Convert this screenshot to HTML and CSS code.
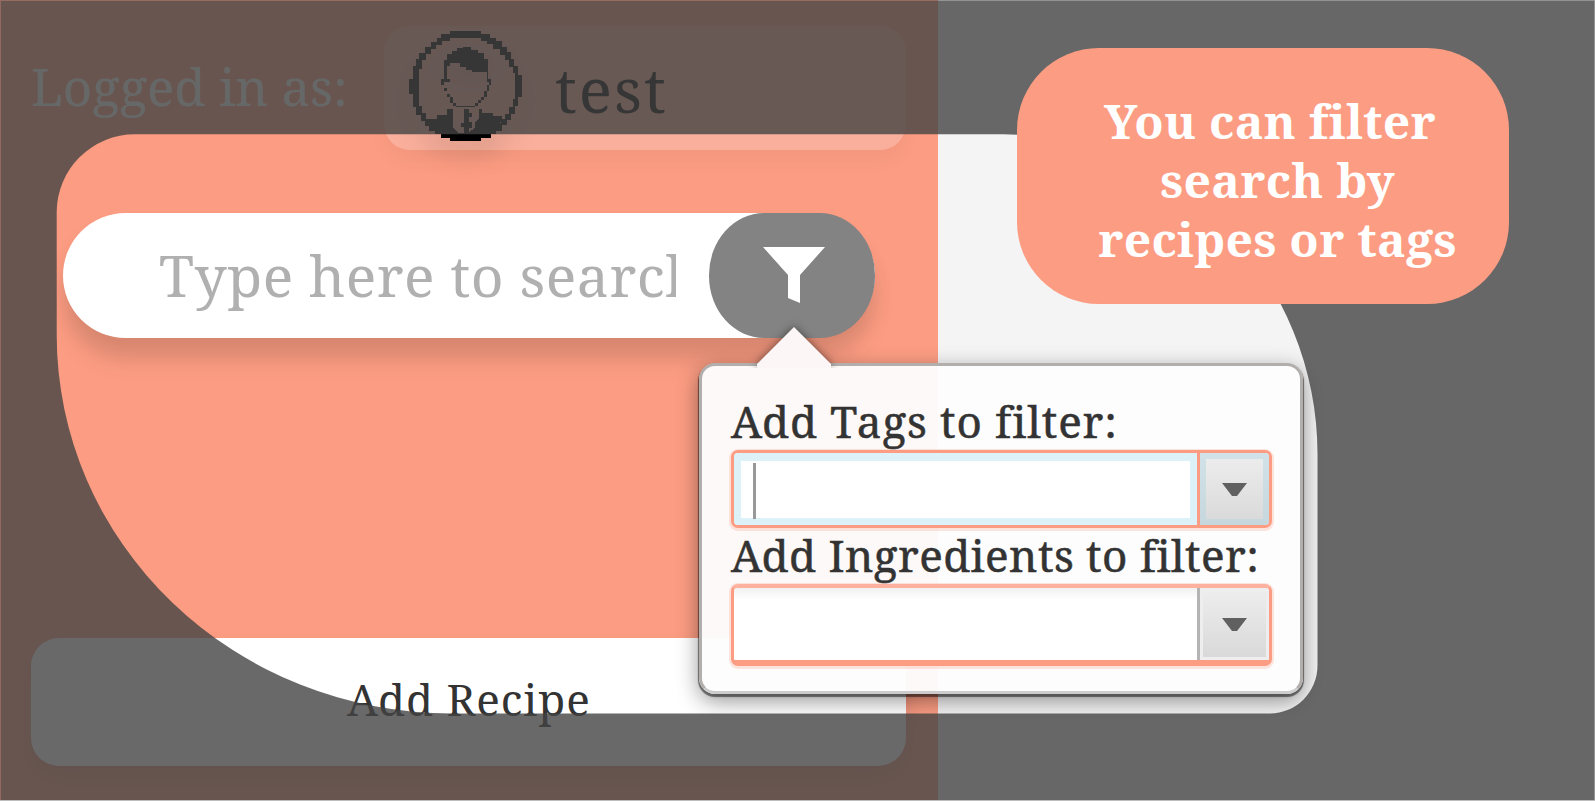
FILE: index.html
```html
<!DOCTYPE html>
<html lang="en">
<head>
<meta charset="utf-8">
<title>Recipe search tutorial</title>
<link rel="stylesheet" href="styles.css">
</head>
<body>
<main class="stage">
  <section class="panel">
    <header class="account">
      <span class="account-label">Logged in as:</span>
      <div class="user">
        <svg class="avatar" viewBox="0 0 113 110" shape-rendering="crispEdges">
          <path fill-rule="evenodd" d="M41 0H72V3H81V7H87V10H93V16H98V21H102V28H105V35H109V44H113V66H109V75H106V83H102V89H98V94H93V100H87V103H82V107H72V110H41V107H32V103H26V100H20V95H16V90H12V84H7V76H4V63H0V48H4V35H7V28H10V22H16V16H22V11H28V7H32V3H41ZM41 7V10H33V14H27V18H22V23H17V29H13V38H10V75H13V82H17V88H22V92H29V97H37V101H47V104H66V101H77V97H85V92H92V88H96V83H100V76H104V68H106V42H104V36H100V29H96V24H91V18H84V13H78V10H72V7Z"/>
          <path d="M35 48V29H38V23H43V20H48V17H54V16H62V19H69V22H75V28H79V41H63V39H57V36H51V32H41V35H38V48Z"/>
          <path d="M35 47H38V51H35V57H38V63H41V66H44V72H47V75H66V72H69V69H72V66H75V60H78V54H80V51H78V41H79V48H82V54H80V60H78V66H75V69H72V72H69V75H66V76H47V75H44V72H41V66H38V60H35V54H32V48H35Z"/>
          <path d="M38 48h3v3h-3z"/>
          <path d="M19 88H28V84H38V78H44V97L49 102H55V96H52V92H55V78H60V82H63V86H60V91H63V97H60V101L66 97V91L70 87V78H73V82H84V85H93V89L87 98L78 104L66 107H47L33 104L23 97Z"/>
        </svg>
        <span class="user-name">test</span>
      </div>
    </header>
    <div class="search">
      <div class="search-field"><span class="placeholder">Type here to search</span></div>
      <div class="filter-button">
        <svg class="funnel" viewBox="0 0 62 56"><path d="M0 0h62L37 28v28l-12-5V28z" fill="#fff"/></svg>
      </div>
    </div>
    <div class="add-button"><span class="add-text">Add Recipe</span></div>
  </section>

  <section class="popover">
    <svg class="tip" viewBox="0 0 74 41"><path d="M0 37L37 0l37 37v4H0z" fill="#fcf7f6"/></svg>
    <label class="field-label tags-label">Add Tags to filter:</label>
    <div class="combo focused">
      <div class="combo-input"><span class="caret"></span></div>
      <div class="combo-arrow"><svg class="arrow" viewBox="0 0 25 13"><path d="M0 0h25L15 13H10z" fill="#606060"/></svg></div>
    </div>
    <label class="field-label ingredients-label">Add Ingredients to filter:</label>
    <div class="combo plain">
      <div class="combo-input"></div>
      <div class="combo-arrow"><svg class="arrow" viewBox="0 0 25 13"><path d="M0 0h25L15 13H10z" fill="#606060"/></svg></div>
    </div>
  </section>

  <svg class="shade" viewBox="0 0 1595 801">
    <path fill-rule="evenodd" fill="#434343" fill-opacity=".8" d="M1 1H1594V800H1V1ZM135 134.300A78.300 78 0 0 0 56.700 212V335A395 378.500 0 0 0 452 713.500H1270A47.500 48 0 0 0 1317.500 665.500V454A314.500 320 0 0 0 1003 134.300Z"/>
    <path fill="none" stroke="#434343" stroke-opacity=".55" d="M0 .5H1594.500V800"/>
    <path fill="none" stroke="#434343" stroke-opacity=".58" d="M.5 1V800"/>
    <path fill="none" stroke="#bdbdbd" d="M0 800.500H1595"/>
  </svg>

  <aside class="callout">
    <span class="tip-line line-one">You can filter</span>
    <span class="tip-line">search by</span>
    <span class="tip-line">recipes or tags</span>
  </aside>
</main>
</body>
</html>
```
FILE: styles.css
```css
* { box-sizing: border-box; }
body { margin: 0; }
.stage {
  position: relative;
  width: 1595px;
  height: 801px;
  overflow: hidden;
  background: #f4f4f4;
  color: #333;
  font-family: "Noto Serif", "DejaVu Serif Condensed", "DejaVu Serif", serif;
  font-variant-ligatures: none;
  white-space: nowrap;
}
.panel {
  width: 938px;
  height: 801px;
  padding: 26px 32px 0 31px;
  background: #fc9d83;
}
.account { display: flex; height: 124px; align-items: center; justify-content: space-between; }
.account-label { height: 64px; font-size: 51px; line-height: 60px; color: #f0fafa; }
.user {
  display: flex;
  width: 522px;
  height: 124px;
  padding: 5px 0 0 25px;
  gap: 33px;
  border-radius: 26px;
  background: rgba(243, 243, 243, .22);
  box-shadow: 0 12px 18px rgba(0, 0, 0, .035);
}
.avatar { width: 113px; height: 110px; filter: drop-shadow(0 14px 12px rgba(0, 0, 0, .13)); }
.user-name { font-size: 62px; line-height: 116px; letter-spacing: 2px; color: #000; }
.search {
  display: flex;
  width: 812px;
  height: 125px;
  margin: 63px 0 0 32px;
  border-radius: 63px;
  background: #fff;
  box-shadow: 0 24px 24px -2px rgba(0, 0, 0, .1), 0 14px 22px rgba(0, 0, 0, .06);
}
.search-field { width: 646px; padding-left: 96px; }
.placeholder {
  display: block;
  width: 517px;
  overflow: hidden;
  font-size: 57px;
  line-height: 124px;
  letter-spacing: .5px;
  color: #b0b0b0;
}
.filter-button {
  width: 166px;
  height: 125px;
  padding: 34px 0 0 54px;
  border-radius: 55px / 62px;
  background: #838383;
}
.funnel { display: block; width: 62px; height: 56px; }
.add-button {
  width: 875px;
  height: 128px;
  margin-top: 300px;
  padding-left: 316px;
  border-radius: 28px;
  background: #fff;
  box-shadow: 0 12px 20px rgba(50, 20, 40, .13);
}
.add-text { font-size: 44px; line-height: 122px; letter-spacing: .95px; }

.popover {
  position: absolute;
  left: 699px;
  top: 363px;
  width: 604px;
  height: 331px;
  padding: 31px 29px 0;
  border: 3px solid #b2aeac;
  border-bottom-color: #ccc;
  border-radius: 16px;
  background: rgba(253, 253, 253, .96);
  box-shadow: 0 2px 1px 1px rgba(0, 0, 0, .5), 0 7px 22px rgba(0, 0, 0, .42);
}
.tip {
  position: absolute;
  left: 55px;
  top: -39px;
  width: 74px;
  height: 41px;
  filter: drop-shadow(0 0 4px rgba(0, 0, 0, .5));
  clip-path: inset(-12px -12px 0 -12px);
}
.field-label {
  display: block;
  height: 53px;
  font-size: 44px;
  line-height: 48px;
  -webkit-text-stroke: .5px #333;
}
.tags-label { letter-spacing: .9px; }
.combo {
  display: flex;
  width: 541px;
  height: 78px;
  overflow: hidden;
  border: 3px solid #fc9d83;
  border-radius: 7px;
  background: #fff;
  box-shadow: 0 1px 0 2px rgba(252, 157, 131, .25);
}
.combo-input { width: 463px; padding: 9px 0 0 18px; }
.combo-arrow {
  flex: 1;
  display: flex;
  align-items: center;
  justify-content: center;
  border-left: 3px solid #fc9d83;
  background: linear-gradient(#eee, #d8d8d8);
}
.focused .combo-input { border: 7px solid #dcf1f8; border-top-width: 8px; padding: 2px 0 0 12px; }
.focused .combo-arrow { box-shadow: inset 0 0 0 6px rgba(180, 215, 228, .5); }
.caret { display: block; width: 3px; height: 56px; background: #999; }
.arrow { width: 25px; height: 13px; }
.ingredients-label { height: 56px; line-height: 54px; letter-spacing: .45px; }
.plain { height: 82px; border-top-color: #fcb29f; border-top-width: 4px; border-bottom-width: 6px; }
.plain .combo-input { background: linear-gradient(#f1f1f1, #fff 12px); }
.plain .combo-arrow { border-left-color: #b4b4b4; box-shadow: inset 0 0 0 3px #eee; }

.shade { position: absolute; left: 0; top: 0; width: 1595px; height: 801px; }
.callout {
  position: absolute;
  left: 1016.500px;
  top: 48.300px;
  width: 492px;
  height: 255.700px;
  padding: 44px 0 0 30px;
  display: flex;
  flex-direction: column;
  align-items: center;
  border-radius: 82px;
  background: #fc9d83;
  color: #fff;
  font-size: 48px;
  font-weight: 700;
  letter-spacing: .3px;
}
.tip-line { height: 58.700px; line-height: 58.700px; }
.line-one { margin-right: 15px; }
```
